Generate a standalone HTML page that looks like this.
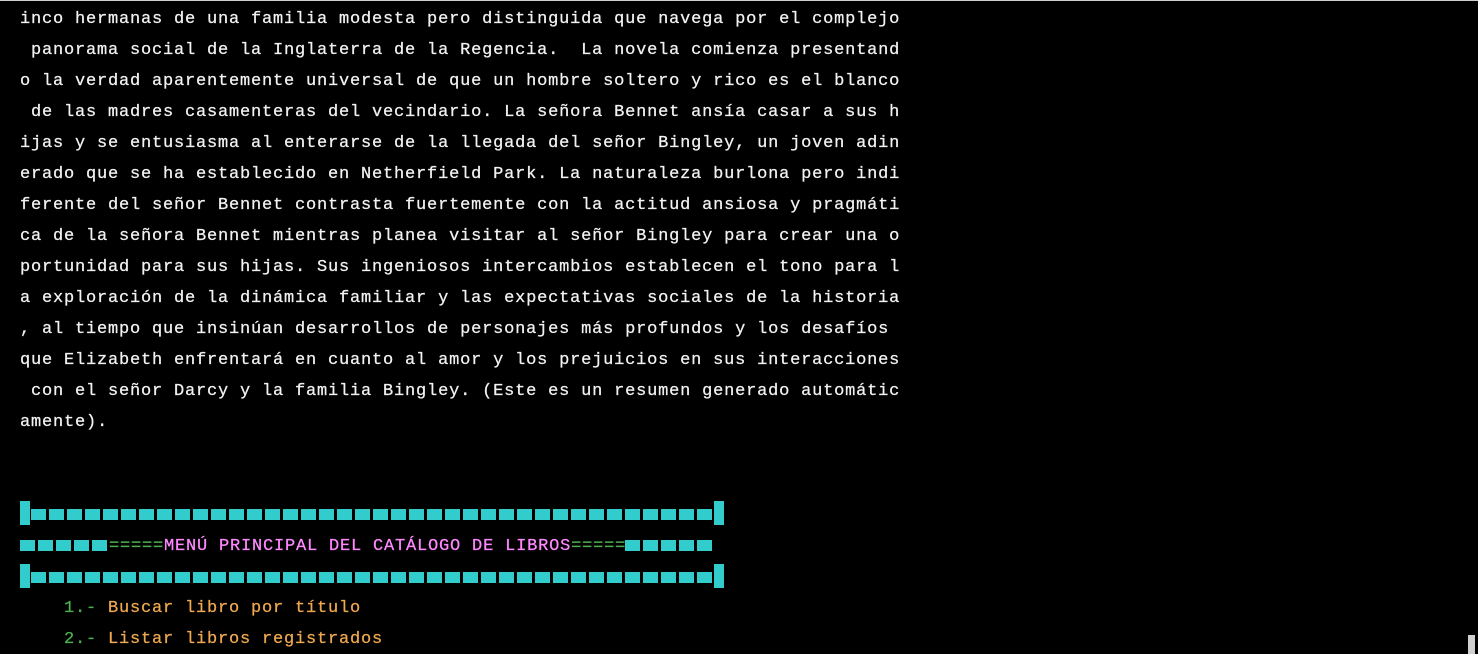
<!DOCTYPE html>
<html><head><meta charset="utf-8"><style>
html,body{margin:0;padding:0;background:#000;width:1478px;height:654px;overflow:hidden;position:relative}
.topline{position:absolute;left:0;top:0;width:1478px;height:1px;background:#cfcfcf}
.l{position:absolute;left:20px;height:31px;line-height:31px;font-family:"Liberation Mono",monospace;font-size:17px;letter-spacing:0.8px;color:#f2f2f2;white-space:pre;-webkit-text-stroke:0.25px currentColor}
.sq{position:absolute;width:15px;height:11px;background:#33cccc}
.bar{position:absolute;width:10px;height:24px;background:#33cccc}
.g{color:#4caf50}.p{color:#ff88ff}.o{color:#f0a850}
.sb{position:absolute;left:1468px;top:635px;width:7px;height:19px;background:#d0d0d0}
</style></head><body>
<div class="topline"></div>
<div class="l" style="top:4px">inco hermanas de una familia modesta pero distinguida que navega por el complejo</div>
<div class="l" style="top:35px"> panorama social de la Inglaterra de la Regencia.  La novela comienza presentand</div>
<div class="l" style="top:66px">o la verdad aparentemente universal de que un hombre soltero y rico es el blanco</div>
<div class="l" style="top:97px"> de las madres casamenteras del vecindario. La señora Bennet ansía casar a sus h</div>
<div class="l" style="top:128px">ijas y se entusiasma al enterarse de la llegada del señor Bingley, un joven adin</div>
<div class="l" style="top:159px">erado que se ha establecido en Netherfield Park. La naturaleza burlona pero indi</div>
<div class="l" style="top:190px">ferente del señor Bennet contrasta fuertemente con la actitud ansiosa y pragmáti</div>
<div class="l" style="top:221px">ca de la señora Bennet mientras planea visitar al señor Bingley para crear una o</div>
<div class="l" style="top:252px">portunidad para sus hijas. Sus ingeniosos intercambios establecen el tono para l</div>
<div class="l" style="top:283px">a exploración de la dinámica familiar y las expectativas sociales de la historia</div>
<div class="l" style="top:314px">, al tiempo que insinúan desarrollos de personajes más profundos y los desafíos </div>
<div class="l" style="top:345px">que Elizabeth enfrentará en cuanto al amor y los prejuicios en sus interacciones</div>
<div class="l" style="top:376px"> con el señor Darcy y la familia Bingley. (Este es un resumen generado automátic</div>
<div class="l" style="top:407px">amente).</div>

<div id="bars"></div>
<div class="l" style="top:531px;left:109px"><span class="g">=====</span><span class="p">MENÚ PRINCIPAL DEL CATÁLOGO DE LIBROS</span><span class="g">=====</span></div>
<div class="l" style="top:593px"><span class="g">    1.- </span><span class="o">Buscar libro por título</span></div>
<div class="l" style="top:624px"><span class="g">    2.- </span><span class="o">Listar libros registrados</span></div>
<div class="sb"></div>
<script>
var c=document.getElementById('bars'),h='';
[501,564].forEach(function(t){
 h+='<div class="bar" style="left:20px;top:'+t+'px"></div><div class="bar" style="left:714px;top:'+t+'px"></div>';
 for(var i=0;i<38;i++){h+='<div class="sq" style="left:'+(31+i*18)+'px;top:'+(t+8)+'px"></div>';}
});
for(var i=0;i<5;i++){
 h+='<div class="sq" style="left:'+(20+i*18)+'px;top:540px"></div>';
 h+='<div class="sq" style="left:'+(625+i*18)+'px;top:540px"></div>';
}
c.innerHTML=h;
</script>
</body></html>
